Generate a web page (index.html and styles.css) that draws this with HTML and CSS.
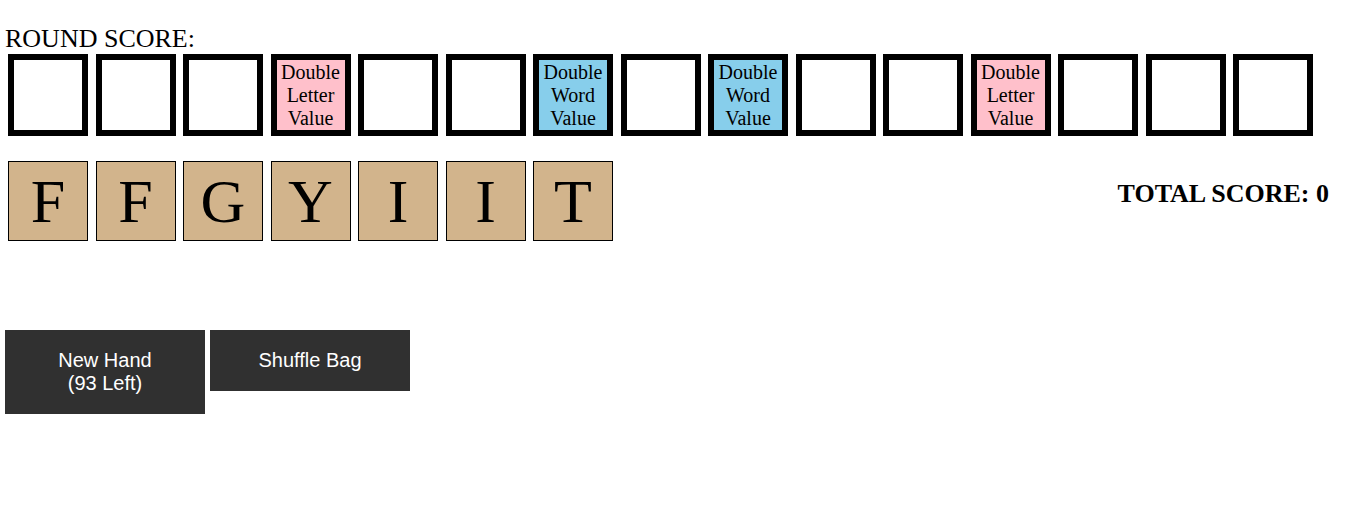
FILE: index.html
```html
<!DOCTYPE html>
<html lang="en">
<head>
    <meta charset="UTF-8">
    <title>Word Tiles</title>
    <link rel="stylesheet" href="styles.css">
</head>
<body>
    <div class="round-label">ROUND SCORE:</div>

    <div class="board">
        <div class="square"></div>
        <div class="square"></div>
        <div class="square"></div>
        <div class="square dl">Double Letter Value</div>
        <div class="square"></div>
        <div class="square"></div>
        <div class="square dw">Double Word Value</div>
        <div class="square"></div>
        <div class="square dw">Double Word Value</div>
        <div class="square"></div>
        <div class="square"></div>
        <div class="square dl">Double Letter Value</div>
        <div class="square"></div>
        <div class="square"></div>
        <div class="square"></div>
    </div>

    <div class="hand-row">
        <div class="rack">
            <div class="tile">F</div>
            <div class="tile">F</div>
            <div class="tile">G</div>
            <div class="tile">Y</div>
            <div class="tile">I</div>
            <div class="tile">I</div>
            <div class="tile">T</div>
        </div>
        <h2 class="total">TOTAL SCORE: 0</h2>
    </div>

    <div class="controls">
        <button class="btn">New Hand<br>(93 Left)</button>
        <button class="btn">Shuffle Bag</button>
    </div>
</body>
</html>
```

FILE: styles.css
```css
body {
    margin: 0;
    padding: 0 5px;
    background: #fff;
    color: #000;
    font-family: 'Liberation Serif', 'Times New Roman', serif;
}

.round-label {
    margin-top: 24px;
    font-size: 26px;
    line-height: 30px;
}

/* BOARD */
.board {
    display: flex;
    gap: 7.5px;
    padding-left: 3px;
}

.square {
    box-sizing: border-box;
    width: 80px;
    height: 82px;
    border: 6px solid #000;
    display: flex;
    align-items: center;
    justify-content: center;
    text-align: center;
    font-size: 20px;
    line-height: 23px;
}

.dl {
    background: pink;
}

.dw {
    background: skyblue;
}

/* HAND */
.hand-row {
    display: flex;
    align-items: center;
    justify-content: space-between;
    margin-top: 25px;
}

.rack {
    display: flex;
    gap: 7.5px;
    padding-left: 3px;
}

.tile {
    box-sizing: border-box;
    width: 80px;
    height: 80px;
    border: 1px solid #000;
    background: tan;
    font-size: 62px;
    line-height: 78px;
    text-align: center;
}

.total {
    margin: 0 32px 14px 0;
    font-size: 26px;
}

/* BUTTONS */
.controls {
    display: flex;
    align-items: flex-start;
    gap: 5px;
    margin-top: 89px;
}

.btn {
    width: 200px;
    padding: 19px 10px;
    border: none;
    background: #303030;
    color: #fff;
    font-family: 'Liberation Sans', Arial, sans-serif;
    font-size: 20px;
    line-height: 23px;
    cursor: pointer;
}
```
